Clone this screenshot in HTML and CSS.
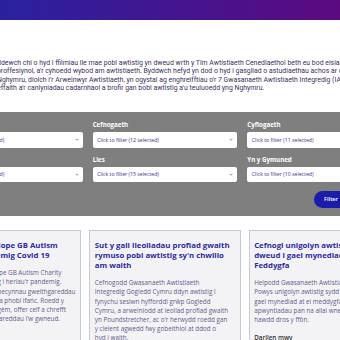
FILE: index.html
```html
<!DOCTYPE html>
<html>
<head>
  <title>Astudiaethau achos</title>
  <link rel="stylesheet" href="styles.css">
</head>
<body>
  <div class="top-bar"></div>
  <div class="page">
    <p class="intro">Fe ddewch chi o hyd i ffilmiau lle mae pobl awtistig yn dweud wrth y Tîm Awtistiaeth Cenedlaethol beth eu bod eisiau i weithwyr<br>proffesiynol, a'r cyhoedd wybod am awtistiaeth. Byddwch hefyd yn dod o hyd i gasgliad o astudiaethau achos ar draws<br>Nghymru, diolch i'r Arweinwyr Awtistiaeth, yn ogystal ag enghreifftiau o'r 7 Gwasanaeth Awtistiaeth Integredig (IAS) sy'n dangos yr<br>effaith a'r canlyniadau cadarnhaol a brofir gan bobl awtistig a'u teuluoedd yng Nghymru.</p>

    <form class="filters">
      <div class="filter-grid">
        <div class="filter">
          <label>Rhanbarth</label>
          <div class="select">Click to filter (22 selected)<svg class="chev" viewBox="0 0 8 5"><path d="M1 1l3 3 3-3"/></svg></div>
        </div>
        <div class="filter">
          <label>Cefnogaeth</label>
          <div class="select">Click to filter (12 selected)<svg class="chev" viewBox="0 0 8 5"><path d="M1 1l3 3 3-3"/></svg></div>
        </div>
        <div class="filter">
          <label>Cyflogaeth</label>
          <div class="select">Click to filter (11 selected)<svg class="chev" viewBox="0 0 8 5"><path d="M1 1l3 3 3-3"/></svg></div>
        </div>
        <div class="filter">
          <label>Addysg</label>
          <div class="select">Click to filter (13 selected)<svg class="chev" viewBox="0 0 8 5"><path d="M1 1l3 3 3-3"/></svg></div>
        </div>
        <div class="filter">
          <label>Lles</label>
          <div class="select">Click to filter (15 selected)<svg class="chev" viewBox="0 0 8 5"><path d="M1 1l3 3 3-3"/></svg></div>
        </div>
        <div class="filter">
          <label>Yn y Gymuned</label>
          <div class="select">Click to filter (10 selected)<svg class="chev" viewBox="0 0 8 5"><path d="M1 1l3 3 3-3"/></svg></div>
        </div>
      </div>
      <div class="filter-actions">
        <button type="button">Filter</button>
      </div>
    </form>

    <div class="cards">
      <div class="card">
        <h2>Sut yr atebodd Hope GB Autism<br>Charity i'r pandemig Covid 19</h2>
        <p>Atebodd elusen yr Hope GB Autism Charity<br>yn gyflym ac yn hyblyg i heriau'r pandemig.<br>Darparodd yr elusen becynnau gweithgareddau<br>i deuluoedd a'u plant a phobl ifanc. Roedd y<br>pecynnau'n cynnwys gêm, offer celf a chrefft<br>a syniadau am weithgareddau i'w gwneud.</p>
        <a href="#">Darllen mwy</a>
      </div>
      <div class="card">
        <h2>Sut y gall lleoliadau profiad gwaith<br>rymuso pobl awtistig sy'n chwilio<br>am waith</h2>
        <p>Cefnogodd Gwasanaeth Awtistiaeth<br>Integredig Gogledd Cymru ddyn awtistig i<br>fynychu sesiwn hyfforddi grŵp Gogledd<br>Cymru, a arweiniodd at leoliad profiad gwaith<br>yn Poundstretcher, ac o'r herwydd roedd gan<br>y cleient agwedd fwy gobeithiol at ddod o<br>hyd i waith.</p>
        <a href="#">Darllen mwy</a>
      </div>
      <div class="card">
        <h2>Cefnogi unigolyn awtistig nad yw'n<br>dweud i gael mynediad at ei<br>Feddygfa</h2>
        <p>Helpodd Gwasanaeth Awtistiaeth Integredig<br>Powys unigolyn awtistig sydd ddim yn siarad i<br>gael mynediad at ei meddygfa i wneud<br>apwyntiadau pan na allai wneud hynny'n<br>hawdd dros y ffôn.</p>
        <a href="#">Darllen mwy</a>
      </div>
    </div>
  </div>
</body>
</html>
```

FILE: styles.css
```css
body {
  margin: 0;
  overflow: hidden;
  background-color: #fff;
  font-family: "Open Sans", sans-serif;
}

.top-bar {
  height: 20px;
  background: linear-gradient(90deg, #2a21a0, #5c0a80);
}

.page {
  width: 470px;
  margin-left: -70px;
}

.intro {
  margin: 39px 0 0;
  padding-left: 67px;
  font-family: Roboto, sans-serif;
  font-size: 6.9px;
  line-height: 8.4px;
  color: #3d3160;
  white-space: nowrap;
  text-indent: -9px;
}

.filters {
  margin-top: 19.5px;
  padding: 8px;
  background-color: #7f7f7f;
}

.filter-grid {
  display: grid;
  grid-template-columns: repeat(3, 1fr);
  column-gap: 10px;
  row-gap: 7px;
}

.filter label {
  display: block;
  margin-bottom: 3px;
  font-size: 6.2px;
  font-weight: bold;
  line-height: 9px;
  color: #fff;
}

.select {
  display: flex;
  justify-content: space-between;
  align-items: center;
  height: 15.5px;
  padding: 0 4px 0 4.5px;
  background-color: #fff;
  border-radius: 2px;
  font-size: 5.2px;
  color: #3a2e8a;
  white-space: nowrap;
}

.chev {
  width: 4px;
  height: 3px;
  fill: none;
  stroke: #666;
  stroke-width: 1.4;
}

.filter-actions {
  display: flex;
  justify-content: flex-end;
  margin-top: 8.5px;
}

.filter-actions button {
  height: 17px;
  margin-right: 44px;
  padding: 0 10px;
  border: none;
  border-radius: 9px;
  background-color: #1c1caa;
  color: #fff;
  font-family: "Open Sans", sans-serif;
  font-size: 5.6px;
  font-weight: 600;
}

.cards {
  display: grid;
  grid-template-columns: repeat(3, 1fr);
  gap: 8px;
  margin-top: 14px;
}

.card {
  min-height: 200px;
  padding: 9px 4.5px;
  background-color: #f3f3f6;
  border: 1px solid #c8c8d6;
  overflow: hidden;
  white-space: nowrap;
}

.card h2 {
  margin: 0;
  font-size: 7.8px;
  font-weight: bold;
  line-height: 10px;
  color: #2e28a4;
}

.card p {
  margin: 8.5px 0 0;
  font-size: 6.3px;
  line-height: 9.2px;
  color: #67598a;
}

.card a {
  display: block;
  margin-top: 9px;
  font-size: 6.3px;
  font-weight: 600;
  color: #333;
  text-decoration: none;
}
```
